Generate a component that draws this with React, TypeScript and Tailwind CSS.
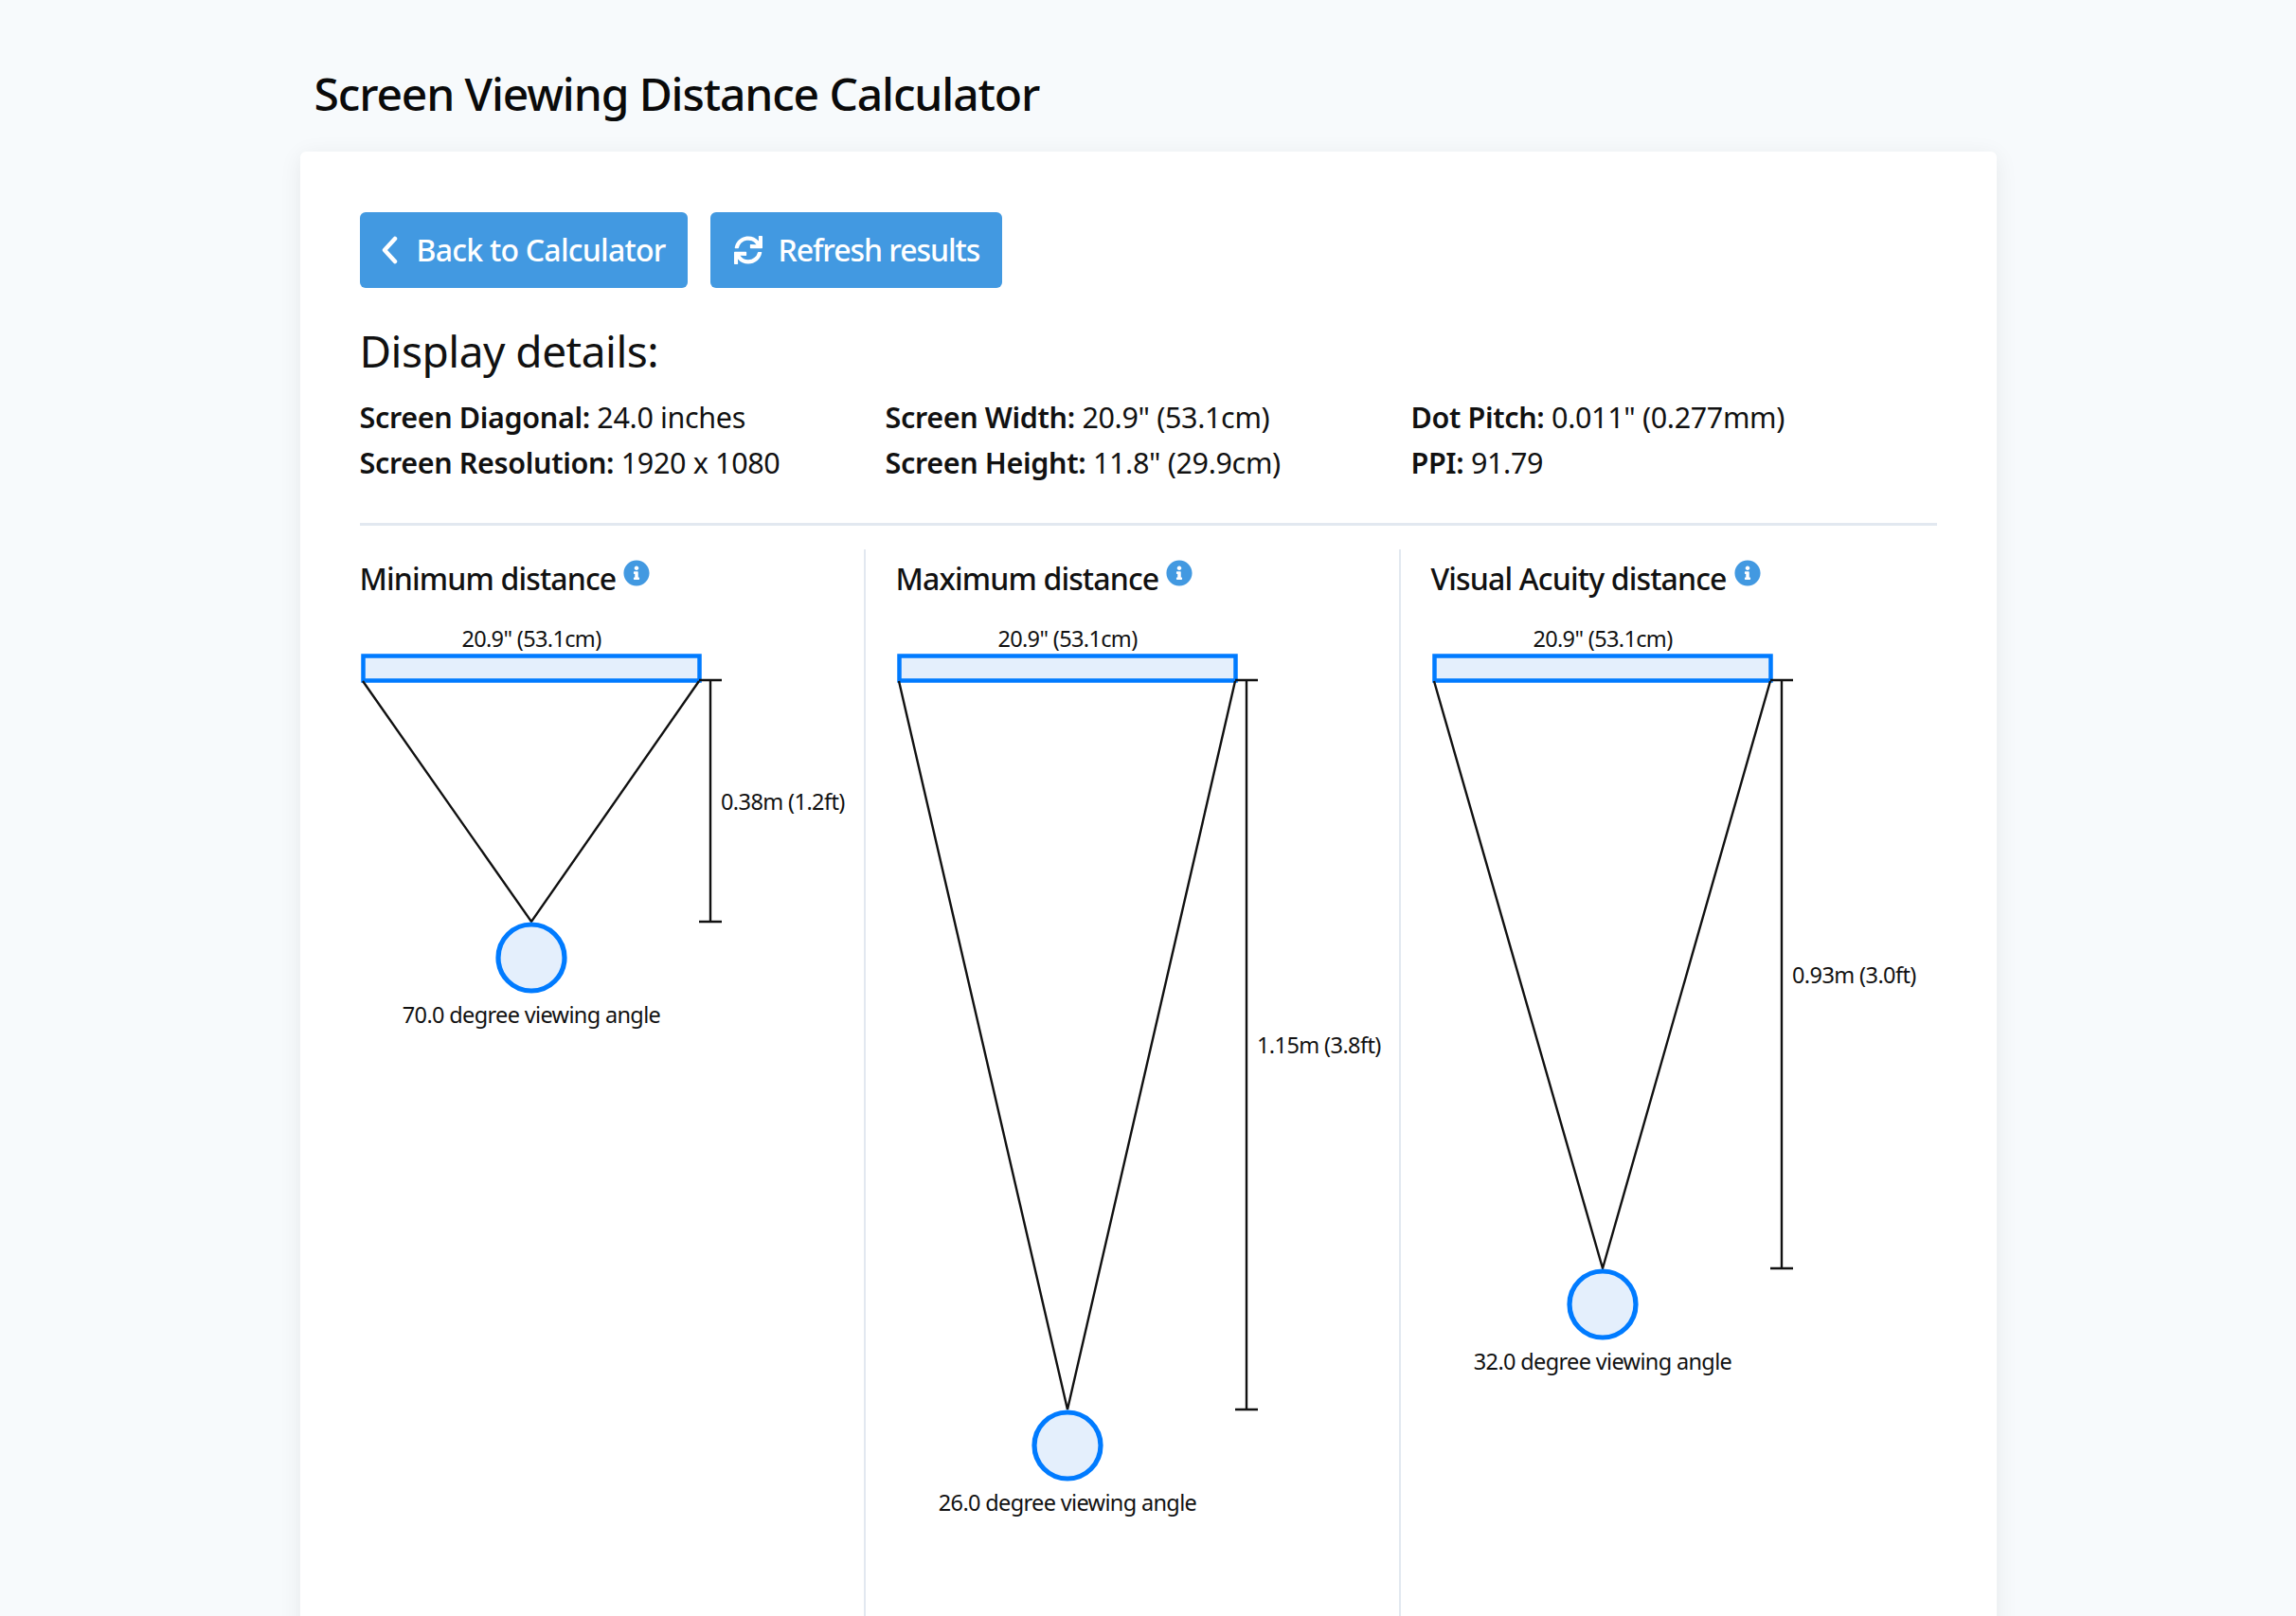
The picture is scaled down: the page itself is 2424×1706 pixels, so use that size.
import React from "react";
import { FaSync, FaInfoCircle } from "react-icons/fa";

const font = { fontFamily: '"Noto Sans", sans-serif' };

function Detail({ label, value }: { label: string; value: string }) {
  return (
    <p className="h-[48px] text-[30.5px] leading-[48px] tracking-[-0.35px] whitespace-nowrap text-[#111]">
      <span className="font-semibold">{label}:</span> {value}
    </p>
  );
}

function Diagram({ dist, distLabel, angle }: { dist: number; distLabel: string; angle: string }) {
  const top = 65;
  const tip = top + dist;
  return (
    <svg width="520" height={tip + 130} className="block" style={font}>
      <text x="181" y="30" textAnchor="middle" fontSize="23.5" letterSpacing="-0.65" fill="#111">20.9" (53.1cm)</text>
      <rect x="3.5" y="39.5" width="355" height="26" fill="#e4effc" stroke="#007bff" strokeWidth="4.5" />
      <path d={`M3 66 L181 ${tip} L358 66`} fill="none" stroke="#111" strokeWidth="2.4" />
      <path d={`M358 ${top} H382 M370 ${top} V${tip} M358 ${tip} H382`} fill="none" stroke="#111" strokeWidth="2.4" />
      <text x="381" y={(top + tip) / 2 + 9} fontSize="23.5" letterSpacing="-0.6" fill="#111">{distLabel}</text>
      <circle cx="181" cy={tip + 38} r="35" fill="#e4effc" stroke="#007bff" strokeWidth="5.2" />
      <text x="181" y={tip + 107} textAnchor="middle" fontSize="23.5" letterSpacing="-0.65" fill="#111">{angle}</text>
    </svg>
  );
}

function Column({ title, dist, distLabel, angle, className }: { title: string; dist: number; distLabel: string; angle: string; className: string }) {
  return (
    <div className={className}>
      <h3 className="flex h-[66px] items-start pt-[6px] text-[32px] font-medium leading-[50px] tracking-[-0.85px] whitespace-nowrap text-[#111]">
        {title}
        <FaInfoCircle className="ml-[8px] mt-[5px] text-[#4299e1]" size={28} />
      </h3>
      <div className="mt-[7px]">
        <Diagram dist={dist} distLabel={distLabel} angle={angle} />
      </div>
    </div>
  );
}

export default function App() {
  return (
    <div className="h-[1706px] overflow-hidden bg-[#f7fafc]" style={font}>
      <div className="mx-auto w-[1791px] pt-[64px]">
        <h1 className="h-[96px] pl-[15px] text-[48px] font-medium leading-[70px] tracking-[-1.13px] text-[#0a0a0a]">
          Screen Viewing Distance Calculator
        </h1>
        <div className="h-[1600px] rounded-[6px] bg-white px-[63px] pt-[64px] shadow-[0_4px_24px_rgba(0,0,0,0.07)]">
          <div className="flex gap-[24px]">
            <button className="flex h-[80px] w-[346px] items-center rounded-[6px] bg-[#4299e1] pl-[22px] text-[32px] font-medium tracking-[-0.75px] text-white">
              <svg width="18" height="30" viewBox="0 0 18 30" fill="none" stroke="currentColor" strokeWidth="4.5" strokeLinecap="round" strokeLinejoin="round">
                <path d="M15 3 L4 15 L15 27" />
              </svg>
              <span className="ml-[20px]">Back to Calculator</span>
            </button>
            <button className="flex h-[80px] w-[308px] items-center rounded-[6px] bg-[#4299e1] pl-[25px] text-[32px] font-medium tracking-[-1.05px] text-white">
              <FaSync size={30} />
              <span className="ml-[17px]">Refresh results</span>
            </button>
          </div>
          <h2 className="mt-[34px] h-[64px] text-[46px] font-normal leading-[64px] tracking-[-0.5px] text-[#111]">Display details:</h2>
          <div className="mt-[14px] grid grid-cols-[555px_555px_1fr]">
            <Detail label="Screen Diagonal" value="24.0 inches" />
            <Detail label="Screen Width" value={'20.9" (53.1cm)'} />
            <Detail label="Dot Pitch" value={'0.011" (0.277mm)'} />
            <Detail label="Screen Resolution" value="1920 x 1080" />
            <Detail label="Screen Height" value={'11.8" (29.9cm)'} />
            <Detail label="PPI" value="91.79" />
          </div>
          <hr className="mt-[40px] border-t-[3px] border-[#e2e8f0]" />
          <div className="mt-[25px] grid h-[1200px] grid-cols-[534px_565px_1fr]">
            <Column title="Minimum distance" dist={255} distLabel="0.38m (1.2ft)" angle="70.0 degree viewing angle" className="border-r-[2px] border-[#e2e8f0]" />
            <Column title="Maximum distance" dist={770} distLabel="1.15m (3.8ft)" angle="26.0 degree viewing angle" className="border-r-[2px] border-[#e2e8f0] pl-[32px]" />
            <Column title="Visual Acuity distance" dist={621} distLabel="0.93m (3.0ft)" angle="32.0 degree viewing angle" className="pl-[32px]" />
          </div>
        </div>
      </div>
    </div>
  );
}
